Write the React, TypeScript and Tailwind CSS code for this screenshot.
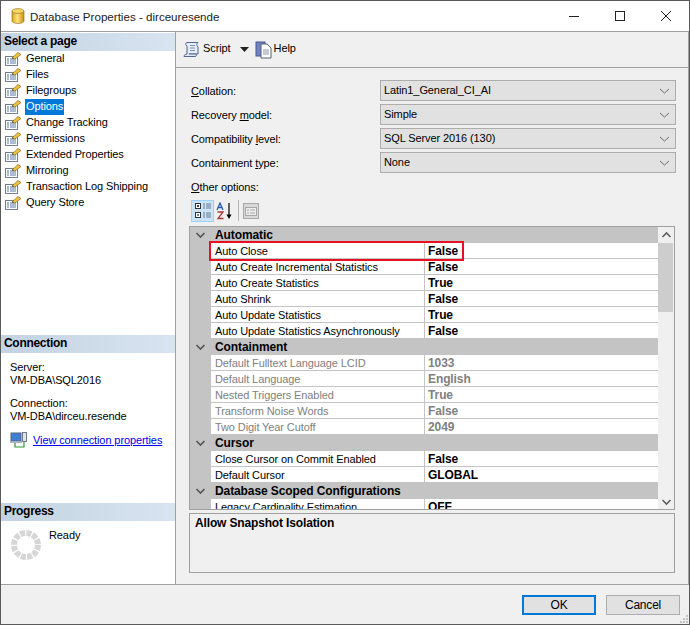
const pages = ["General","Files","Filegroups","Options","Change Tracking","Permissions","Extended Properties","Mirroring","Transaction Log Shipping","Query Store"];

type Row = [string, string];
type Group = { title: string; rows: Row[]; disabled?: boolean };
const groups: Group[] = [
  { title: "Automatic", rows: [["Auto Close","False"],["Auto Create Incremental Statistics","False"],["Auto Create Statistics","True"],["Auto Shrink","False"],["Auto Update Statistics","True"],["Auto Update Statistics Asynchronously","False"]] },
  { title: "Containment", disabled: true, rows: [["Default Fulltext Language LCID","1033"],["Default Language","English"],["Nested Triggers Enabled","True"],["Transform Noise Words","False"],["Two Digit Year Cutoff","2049"]] },
  { title: "Cursor", rows: [["Close Cursor on Commit Enabled","False"],["Default Cursor","GLOBAL"]] },
  { title: "Database Scoped Configurations", rows: [["Legacy Cardinality Estimation","OFF"]] },
];

function PageIcon() {
  return (
    <svg width="17" height="16" viewBox="0 0 17 16" className="shrink-0">
      <rect x="0.5" y="5.5" width="12" height="9" fill="#fff" stroke="#6f7f95" />
      <path d="M2 8h2M5 8h6M2 10h2M5 10h6M2 12h2M5 12h6" stroke="#5b74a8" strokeWidth="1" />
      <path d="M7 7 L13 1.5 L16 3.5 L10 8 Z" fill="#f0c040" stroke="#8a6a20" strokeWidth="0.7" />
      <path d="M7 8 L7.5 6.5 L9 7.5 Z" fill="#444" />
    </svg>
  );
}

function SectionHeader({ children }: { children: string }) {
  return (
    <div className="h-[18px] shrink-0 bg-gradient-to-r from-[#c3d3e2] to-[#d8e4f0] pl-[3px] font-bold text-[12px] tracking-[-0.3px] leading-[17px] text-black">
      {children}
    </div>
  );
}

function Combo({ value }: { value: string }) {
  return (
    <div className="h-[21px] w-[296px] border border-[#adadad] bg-[#e1e1e1] flex items-center justify-between pl-[3px] pr-[2px]">
      <span>{value}</span>
      <svg width="17" height="10" viewBox="0 0 17 10"><path d="M4 3l4.5 4L13 3" fill="none" stroke="#6d6d6d" strokeWidth="1" /></svg>
    </div>
  );
}

function Chevron({ down = true, color = "#555" }: { down?: boolean; color?: string }) {
  return (
    <svg width="11" height="8" viewBox="0 0 11 8">
      <path d={down ? "M1.5 2l4 4 4-4" : "M1.5 6l4-4 4 4"} fill="none" stroke={color} strokeWidth="1.6" />
    </svg>
  );
}

function Spinner() {
  return (
    <svg width="30" height="30" viewBox="0 0 30 30" className="shrink-0">
      <circle cx="15" cy="15" r="12" fill="none" stroke="#d6d6d6" strokeWidth="6" strokeDasharray="5 1.283" />
    </svg>
  );
}

function Label({ pre, u, post }: { pre?: string; u: string; post: string }) {
  return <div className="h-[24px] leading-[22px] pl-[3px]">{pre}<u>{u}</u>{post}</div>;
}

export default function App() {
  return (
    <div className="w-[690px] h-[625px] border border-[#5a5a5a] bg-[#f0f0f0] flex flex-col overflow-hidden text-[11px] tracking-[-0.1px] leading-[13px] text-black [font-family:'Liberation_Sans',Arial,sans-serif]">
      {/* title bar */}
      <div className="h-[30px] bg-white border-b border-[#a0a0a0] box-content flex items-center shrink-0">
        <svg width="14" height="16" viewBox="0 0 14 16" className="ml-[10px]">
          <defs><linearGradient id="db" x1="0" x2="1"><stop offset="0" stopColor="#d9a520" /><stop offset="0.45" stopColor="#fde27a" /><stop offset="1" stopColor="#c98f12" /></linearGradient></defs>
          <path d="M1 3v10c0 1.3 2.7 2.5 6 2.5s6-1.2 6-2.500V3z" fill="url(#db)" stroke="#8f6a10" strokeWidth="0.6" />
          <ellipse cx="7" cy="3" rx="6" ry="2.4" fill="#f6d765" stroke="#8f6a10" strokeWidth="0.6" />
        </svg>
        <span className="ml-[5px] text-[11.6px] tracking-normal text-[#222]">Database Properties - dirceuresende</span>
        <div className="ml-auto flex items-center">
          <svg width="12" height="12" viewBox="0 0 12 12" className="mr-[34px]"><path d="M1 6.500h10" stroke="#222" /></svg>
          <svg width="12" height="12" viewBox="0 0 12 12" className="mr-[34px]"><rect x="1.500" y="1.500" width="9" height="9" fill="none" stroke="#222" /></svg>
          <svg width="12" height="12" viewBox="0 0 12 12" className="mr-[17px]"><path d="M1 1l10 10M11 1L1 11" stroke="#222" /></svg>
        </div>
      </div>

      <div className="flex h-[552px] shrink-0">
        {/* left panel */}
        <div className="w-[174px] bg-white border-r border-[#a0a0a0] box-content flex flex-col pt-[1px]">
          <SectionHeader>Select a page</SectionHeader>
          <div className="h-[284px]">
            {pages.map((p) => (
              <div key={p} className="h-[16px] flex items-center pl-[4px]">
                <PageIcon />
                <span className={p === "Options" ? "ml-[3px] px-[1px] bg-[#0078d7] text-white h-[16px] leading-[15px]" : "ml-[3px] px-[1px] h-[16px] leading-[15px]"}>{p}</span>
              </div>
            ))}
          </div>
          <SectionHeader>Connection</SectionHeader>
          <div className="h-[150px] pl-[9px] pt-[8px]">
            <div>Server:</div>
            <div>VM-DBA\SQL2016</div>
            <div className="mt-[10px]">Connection:</div>
            <div>VM-DBA\dirceu.resende</div>
            <div className="mt-[9px] flex items-center">
              <svg width="17" height="16" viewBox="0 0 17 16" className="shrink-0">
                <rect x="1" y="1" width="10" height="8" fill="#3f7fd8" stroke="#56657c" />
                <rect x="0" y="9" width="12" height="2" fill="#aab2c0" />
                <rect x="12.500" y="0.500" width="4" height="9" fill="#dfe4ea" stroke="#6d7a8c" />
                <path d="M5 11v4h9v-5" fill="none" stroke="#2f9a2f" strokeWidth="1.2" />
              </svg>
              <span className="ml-[6px] text-[#0000ee] underline whitespace-nowrap">View connection properties</span>
            </div>
          </div>
          <SectionHeader>Progress</SectionHeader>
          <div className="flex pl-[10px] pt-[9px]">
            <Spinner />
            <span className="ml-[8px] mt-[-1px]">Ready</span>
          </div>
        </div>

        {/* right panel */}
        <div className="flex-1 flex flex-col border-r border-[#a0a0a0]">
          <div className="h-[36px] border-b border-[#a0a0a0] flex items-center pl-[7px] shrink-0">
            <svg width="18" height="18" viewBox="0 0 18 18">
              <path d="M4 1.500h11c-1.500 1-1.500 3 0 4.500v7H5.500" fill="#e6edf7" stroke="#50678f" />
              <path d="M4 1.500c-1.500 0-2 2.500 0 3.500v8c-1 0-3 .5-3 2.500h11c1.500 0 2-2 1-2.500H6" fill="#dbe5f4" stroke="#50678f" />
              <path d="M7 4.500h5M7 7h5M7 9.500h5" stroke="#7f93b8" />
            </svg>
            <span className="ml-[2px] mb-[2px]">Script</span>
            <svg width="9" height="5" viewBox="0 0 9 5" className="ml-[9px]"><path d="M0 0h9L4.500 5z" fill="#222" /></svg>
            <svg width="18" height="18" viewBox="0 0 18 18" className="ml-[6px]">
              <rect x="1" y="1" width="9" height="14" fill="#6f82c4" stroke="#47578f" />
              <path d="M6 3h6l4 4v10H6z" fill="#fff" stroke="#55606f" />
              <path d="M8 9h6M8 11h6M8 13h6" stroke="#8a96a8" />
            </svg>
            <span className="ml-[1px] mb-[2px]">Help</span>
          </div>

          <div className="flex-1 pl-[12px] pt-[12px] relative">
            <div className="flex">
              <div className="w-[192px]">
                <Label u="C" post="ollation:" />
                <Label pre="Recovery " u="m" post="odel:" />
                <Label pre="Compatibility " u="l" post="evel:" />
                <Label pre="Containment " u="t" post="ype:" />
              </div>
              <div className="flex flex-col gap-[3px]">
                <Combo value="Latin1_General_CI_AI" />
                <Combo value="Simple" />
                <Combo value="SQL Server 2016 (130)" />
                <Combo value="None" />
              </div>
            </div>
            <div className="mt-[5px] pl-[3px] h-[13px]"><u>O</u>ther options:</div>

            {/* grid toolbar */}
            <div className="flex items-center h-[23px] mt-[5px] pl-[3px]">
              <div className="w-[23px] h-[22px] bg-[#cce4f7] border border-[#99d1ff] flex items-center justify-center">
                <svg width="18" height="17" viewBox="0 0 18 17">
                  <rect x="1.500" y="1.500" width="5" height="5" fill="#fff" stroke="#333" />
                  <rect x="1.500" y="10.500" width="5" height="5" fill="#fff" stroke="#333" />
                  <path d="M3 4h2M4 3v2M3 13h2" stroke="#000" />
                  <path d="M9 2h2M12 2h5M9 4h2M12 4h5M9 6h2M12 6h5M9 11h2M12 11h5M9 13h2M12 13h5M9 15h2M12 15h5" stroke="#6b7a90" />
                </svg>
              </div>
              <svg width="18" height="18" viewBox="0 0 18 18" className="ml-[2px]">
                <path d="M1 8l3-7 3 7M2.200 5.500h3.600" fill="none" stroke="#2a5cae" strokeWidth="1.300" />
                <path d="M1.500 10h5.500l-5 6.500h5.500" fill="none" stroke="#a63a3a" strokeWidth="1.300" />
                <path d="M13 1v14" stroke="#000" strokeWidth="1.200" />
                <path d="M10.500 12.500h5L13 17z" fill="#000" />
              </svg>
              <div className="w-[1px] h-[21px] bg-[#b5b5b5] ml-[4px]" />
              <svg width="16" height="16" viewBox="0 0 16 16" className="ml-[4px]">
                <rect x="0.500" y="0.500" width="15" height="15" fill="#d8d8d8" stroke="#a8a8a8" />
                <rect x="2.500" y="4.500" width="11" height="8" fill="#ececec" stroke="#a8a8a8" />
                <path d="M4 7h2M7 7h5M4 10h2M7 10h5" stroke="#a8a8a8" />
              </svg>
            </div>

            {/* property grid */}
            <div className="relative mt-[4px] ml-[1px] w-[486px] h-[284px] border border-[#a0a0a0] bg-[#c4c4c4] flex overflow-hidden">
              <div className="w-[468px] overflow-hidden">
                {groups.map((g) => (
                  <div key={g.title}>
                    <div className="h-[16px] flex items-center font-bold text-[12px] tracking-[-0.1px] leading-[16px] text-black">
                      <span className="w-[25px] pl-[5px] flex items-center"><Chevron /></span>
                      {g.title}
                    </div>
                    {g.rows.map(([n, v]) => (
                      <div key={n} className={g.disabled ? "h-[16px] ml-[21px] bg-white border-b border-[#c4c4c4] flex text-[#808080]" : "h-[16px] ml-[21px] bg-white border-b border-[#c4c4c4] flex"}>
                        <div className="w-[209px] pl-[4px] border-r border-[#c4c4c4] box-content leading-[16px] whitespace-nowrap overflow-hidden">{n}</div>
                        <div className="pl-[3px] font-bold text-[12px] leading-[16px]">{v}</div>
                      </div>
                    ))}
                  </div>
                ))}
              </div>
              <div className="w-[16px] bg-[#f0f0f0] flex flex-col items-center justify-between relative">
                <div className="h-[16px] flex items-center"><Chevron down={false} color="#606060" /></div>
                <div className="absolute top-[16px] left-0 w-[15px] h-[69px] bg-[#cdcdcd]" />
                <div className="h-[16px] flex items-center mb-[-1px]"><Chevron color="#606060" /></div>
              </div>
              <div className="absolute left-[19px] top-[14px] w-[255px] h-[20px] border-2 border-[#e81123]" />
            </div>

            {/* description */}
            <div className="mt-[3px] ml-[1px] w-[486px] h-[60px] border border-[#a0a0a0] font-bold text-[12px] tracking-[-0.15px] pl-[5px] pt-[2px] leading-[15px]">Allow Snapshot Isolation</div>
          </div>
        </div>
      </div>

      {/* footer */}
      <div className="flex-1 border-t border-[#a0a0a0] relative flex justify-end items-start pt-[10px] pr-[9px] gap-[10px]">
        <button className="w-[74px] h-[20px] bg-[#e1e1e1] border-2 border-[#0078d7] leading-[15px] text-[12px] tracking-[-0.1px]">OK</button>
        <button className="w-[74px] h-[20px] bg-[#e1e1e1] border border-[#adadad] leading-[17px] text-[12px] tracking-[-0.2px]">Cancel</button>
        <svg width="10" height="10" viewBox="0 0 10 10" className="absolute right-0 bottom-0">
          <path d="M7 1h2v2H7zM4 4h2v2H4zM7 4h2v2H7zM1 7h2v2H1zM4 7h2v2H4zM7 7h2v2H7z" fill="#c4c4c4" />
        </svg>
      </div>
    </div>
  );
}
